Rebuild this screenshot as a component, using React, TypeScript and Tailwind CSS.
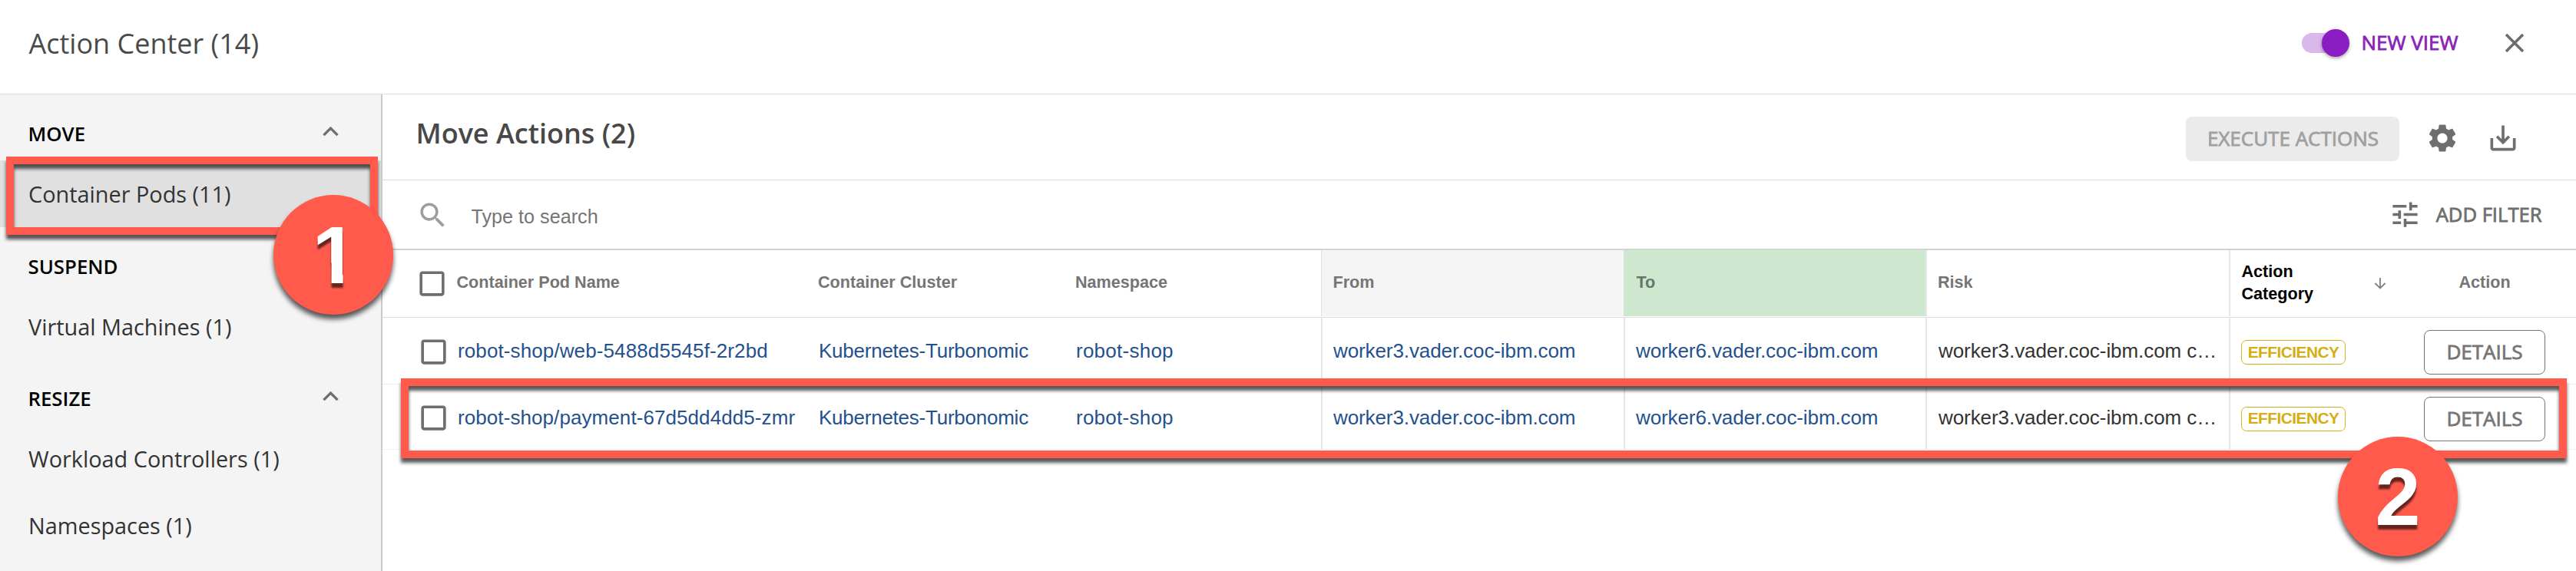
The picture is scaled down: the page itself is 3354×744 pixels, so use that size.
import type { ReactNode } from "react";
import {
  MdCheckBoxOutlineBlank,
  MdExpandLess,
  MdSaveAlt,
  MdSearch,
  MdSettings,
  MdTune,
} from "react-icons/md";

const sans = "font-['Open_Sans',sans-serif]";
const medium = "font-normal [-webkit-text-stroke:0.8px_currentColor]";
const grid =
  "grid grid-cols-[96px_471px_335px_320px_394px_393px_395px_254px_158px_minmax(0,1fr)]";

function SideHeading({ children, open }: { children: string; open?: boolean }) {
  return (
    <div className="flex h-[86px] shrink-0 items-center justify-between pt-[15px] pr-[45px] pl-[36.5px] text-[25.8px] leading-none font-semibold text-black">
      <span className="pt-[3px]">{children}</span>
      {open && <MdExpandLess className="mb-[5px] size-[41px] text-[#6e6e6e]" />}
    </div>
  );
}

function SideItem({ children, selected }: { children: string; selected?: boolean }) {
  return (
    <div
      className={`flex h-[86.5px] shrink-0 items-center pt-[3px] pl-[37px] text-[28.85px] leading-none text-[#333] ${
        selected ? "bg-[#e0e0e0]" : ""
      }`}
    >
      {children}
    </div>
  );
}

function Check({ className = "" }: { className?: string }) {
  return <MdCheckBoxOutlineBlank className={`size-[43px] text-[#6e6e6e] ${className}`} />;
}

function Row({
  pod,
  podClass,
  className,
  actionClass,
}: {
  pod: string;
  podClass: string;
  className: string;
  actionClass: string;
}) {
  const ruled = "flex h-full items-center border-l-2 border-[#e6e6e6]";
  return (
    <div
      className={`${grid} items-center text-[26px] leading-[32px] whitespace-nowrap text-[#24518e] ${className}`}
    >
      <div className="pt-[2px] pl-[44.5px]">
        <Check />
      </div>
      <div className={`pl-[2px] ${podClass}`}>{pod}</div>
      <div className="pl-[1px] tracking-[-0.24px]">Kubernetes-Turbonomic</div>
      <div className="pl-[1px] tracking-[0.25px]">robot-shop</div>
      <div className={`${ruled} pl-[14px] tracking-[-0.1px]`}>worker3.vader.coc-ibm.com</div>
      <div className={`${ruled} pl-[14px] tracking-[-0.1px]`}>worker6.vader.coc-ibm.com</div>
      <div className={`${ruled} pl-[15px] tracking-[-0.07px] text-[#333]`}>
        worker3.vader.coc-ibm.com c…
      </div>
      <div className={`${ruled} pt-[4px] pl-[14px]`}>
        <span className="flex h-[32px] w-[136px] items-center justify-center rounded-[7px] border border-[#d6b21c] text-[20.8px] leading-none font-bold tracking-[-0.5px] text-[#d4ae12]">
          EFFICIENCY
        </span>
      </div>
      <div
        className={`${sans} ${medium} flex h-[58px] items-center justify-center rounded-[8px] border border-[#757575] bg-white pb-[2px] leading-none text-[#757575] ${actionClass}`}
      >
        DETAILS
      </div>
    </div>
  );
}

function Callout({
  children,
  className,
  glyphClass = "",
}: {
  children: ReactNode;
  className: string;
  glyphClass?: string;
}) {
  return (
    <div
      className={`absolute flex size-[156px] items-center justify-center rounded-full bg-[#ff5a4c] drop-shadow-[0_6px_3px_rgba(0,0,0,0.65)] ${className}`}
    >
      <div className="drop-shadow-[0_6px_1px_rgba(0,0,0,0.6)]">
        <span className={`block text-[106px] leading-none font-bold text-white ${glyphClass}`}>
          {children}
        </span>
      </div>
    </div>
  );
}

export default function App() {
  return (
    <div className="relative flex h-[744px] w-[3354px] flex-col overflow-hidden bg-white font-['Liberation_Sans',sans-serif]">
      <header
        className={`${sans} flex h-[123px] shrink-0 items-center border-b border-[#dedede] pb-[10px] leading-none`}
      >
        <h1 className="grow pt-[2px] pl-[37.5px] text-[36px] text-[#4a4a4a]">
          Action Center (14)
        </h1>
        <div className="flex w-[63px] items-center">
          <div className="h-[26px] w-[27px] rounded-l-full bg-[#dbb8ec]" />
          <div className="-ml-[1px] flex h-[26px] w-[32px] items-center rounded-r-full bg-[#dbb8ec]">
            <div className="size-[36px] shrink-0 rounded-full bg-[#8b1cc1] shadow-[0_2px_4px_rgba(0,0,0,0.35)]" />
          </div>
        </div>
        <span className={`${medium} w-[202px] pb-[2px] pl-[14.5px] text-[26px] text-[#8b22b8]`}>
          NEW VIEW
        </span>
        <svg
          viewBox="0 0 24 24"
          className="mr-[68px] size-[24px] shrink-0 text-[#6e6e6e]"
          fill="none"
          stroke="currentColor"
          strokeWidth="3.6"
        >
          <path d="M1 1 23 23M23 1 1 23" />
        </svg>
      </header>

      <div className="flex min-h-0 grow">
        <nav
          className={`${sans} flex w-[498px] shrink-0 flex-col border-r-2 border-[#cbcbcb] bg-[#f4f4f4]`}
        >
          <SideHeading open>MOVE</SideHeading>
          <SideItem selected>Container Pods (11)</SideItem>
          <SideHeading>SUSPEND</SideHeading>
          <SideItem>Virtual Machines (1)</SideItem>
          <SideHeading open>RESIZE</SideHeading>
          <SideItem>Workload Controllers (1)</SideItem>
          <SideItem>Namespaces (1)</SideItem>
        </nav>

        <main className="flex min-w-0 grow flex-col">
          <div
            className={`${sans} flex h-[112px] shrink-0 items-center border-b border-[#dedede] leading-none`}
          >
            <h2 className="grow pb-[10px] pl-[43.5px] text-[36px] font-semibold text-[#484848]">
              Move Actions (2)
            </h2>
            <button
              className={`${medium} mt-[5px] h-[58px] w-[278px] rounded-[8px] bg-[#ebebeb] pb-[2px] pl-[1px] text-[26px] text-[#a0a0a0]`}
            >
              EXECUTE ACTIONS
            </button>
            <MdSettings className="mt-[2px] ml-[34px] size-[44px] text-[#6e6e6e]" />
            <MdSaveAlt className="mt-[2px] mr-[73px] ml-[35px] size-[44px] text-[#6e6e6e]" />
          </div>

          <div className="flex h-[91px] shrink-0 items-center border-b-2 border-[#d3d3d3]">
            <MdSearch className="mt-[2px] ml-[43.5px] size-[43px] text-[#9e9e9e]" />
            <span className="grow pt-[6px] pl-[29px] text-[25.2px] leading-none text-[#757575]">
              Type to search
            </span>
            <MdTune className="size-[43px] text-[#6e6e6e]" />
            <span
              className={`${sans} ${medium} mr-[44.5px] ml-[18.5px] text-[25.6px] leading-none text-[#6e6e6e]`}
            >
              ADD FILTER
            </span>
          </div>

          <div
            className={`${grid} h-[88px] shrink-0 items-center border-b border-[#dedede] pb-[1px] text-[21.6px] leading-[29px] font-bold text-[#757575]`}
          >
            <div className="pl-[42.5px]">
              <Check />
            </div>
            <div className="pb-[4px] pl-[0.5px]">Container Pod Name</div>
            <div className="pb-[4px]">Container Cluster</div>
            <div className="pb-[4px]">Namespace</div>
            <div className="flex h-full items-center border-l border-[#e0e0e0] bg-[#f5f5f5] pb-[4px] pl-[14.5px]">
              From
            </div>
            <div className="flex h-full items-center border-l border-[#d8dfd8] bg-[#cee8d0] pb-[4px] pl-[15.5px] text-[#66776a]">
              To
            </div>
            <div className="flex h-full items-center border-l-2 border-[#e6e6e6] pb-[4px] pl-[14px]">
              Risk
            </div>
            <div className="flex h-full items-center justify-between border-l-2 border-[#e6e6e6] pr-[49px] pb-[3px] pl-[14.5px] text-black">
              <span>
                Action
                <br />
                Category
              </span>
              <svg
                viewBox="0 0 16 16"
                className="mt-[2px] size-[16px] text-[#808080]"
                fill="none"
                stroke="currentColor"
                strokeWidth="1.8"
              >
                <path d="M8 1V14.2M1.4 8 8 14.4 14.6 8" />
              </svg>
            </div>
            <div className="pb-[4px] text-center">Action</div>
          </div>

          <Row
            pod="robot-shop/web-5488d5545f-2r2bd"
            podClass="tracking-[0.11px]"
            className="h-[87px] shrink-0 border-b border-[#ececec]"
            actionClass="mt-[3px]"
          />
          <Row
            pod="robot-shop/payment-67d5dd4dd5-zmr"
            podClass="tracking-[0.08px]"
            className="h-[85px] shrink-0 border-b border-[#f2f2f2] pt-[1px]"
            actionClass="mt-[5px]"
          />
        </main>
      </div>

      <div className="absolute top-[204px] left-[8px] h-[102px] w-[484px] border-[10px] border-[#ff5a4c] drop-shadow-[0_6px_2px_rgba(0,0,0,0.65)]" />
      <div className="absolute top-[493px] left-[522px] h-[104px] w-[2820px] border-[10px] border-[#ff5a4c] drop-shadow-[0_6px_2px_rgba(0,0,0,0.65)]" />
      <Callout
        className="top-[254px] left-[356px] pl-[4px]"
        glyphClass="[clip-path:polygon(0_0,68%_0,68%_100%,42.5%_100%,42.5%_60%,0_60%)]"
      >
        1
      </Callout>
      <Callout className="top-[569px] left-[3044px]">2</Callout>
    </div>
  );
}
